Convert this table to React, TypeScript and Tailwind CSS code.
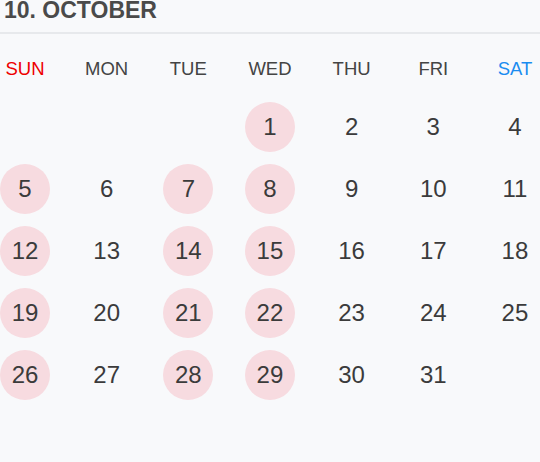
import React from "react";

const headers = ["SUN", "MON", "TUE", "WED", "THU", "FRI", "SAT"];
const highlighted = new Set([1, 5, 7, 8, 12, 14, 15, 19, 21, 22, 26, 28, 29]);

export default function App() {
  const cells: (number | null)[] = [null, null, null];
  for (let d = 1; d <= 31; d++) cells.push(d);
  while (cells.length % 7 !== 0) cells.push(null);
  const rows: (number | null)[][] = [];
  for (let i = 0; i < cells.length; i += 7) rows.push(cells.slice(i, i + 7));

  return (
    <div
      className="w-[540px] h-[462px] bg-[#f8f9fb] overflow-hidden"
      style={{ fontFamily: '"Liberation Sans", Arial, sans-serif' }}
    >
      <div className="h-[34px] border-b-2 border-[#e7e9ec] pl-[4px]">
        <div className="text-[23px] leading-[20px] font-bold text-[#4a4a4a]">10. OCTOBER</div>
      </div>
      <div className="flex justify-between pt-[24px] pb-[22px] text-[18.5px] leading-[22px] text-[#444444]">
        {headers.map((h, i) => (
          <div
            key={h}
            className={
              "w-[50px] text-center " +
              (i === 0 ? "text-[#ee0000]" : i === 6 ? "text-[#1a8cf0]" : "")
            }
          >
            {h}
          </div>
        ))}
      </div>
      <div className="flex flex-col gap-[12px]">
        {rows.map((r, ri) => (
          <div key={ri} className="flex justify-between">
            {r.map((d, ci) => (
              <div
                key={ci}
                className={
                  "w-[50px] h-[50px] rounded-full flex items-center justify-center text-[24px] text-[#3b3b3b] " +
                  (d !== null && highlighted.has(d) ? "bg-[#f7dbe0]" : "")
                }
              >
                {d ?? ""}
              </div>
            ))}
          </div>
        ))}
      </div>
    </div>
  );
}
